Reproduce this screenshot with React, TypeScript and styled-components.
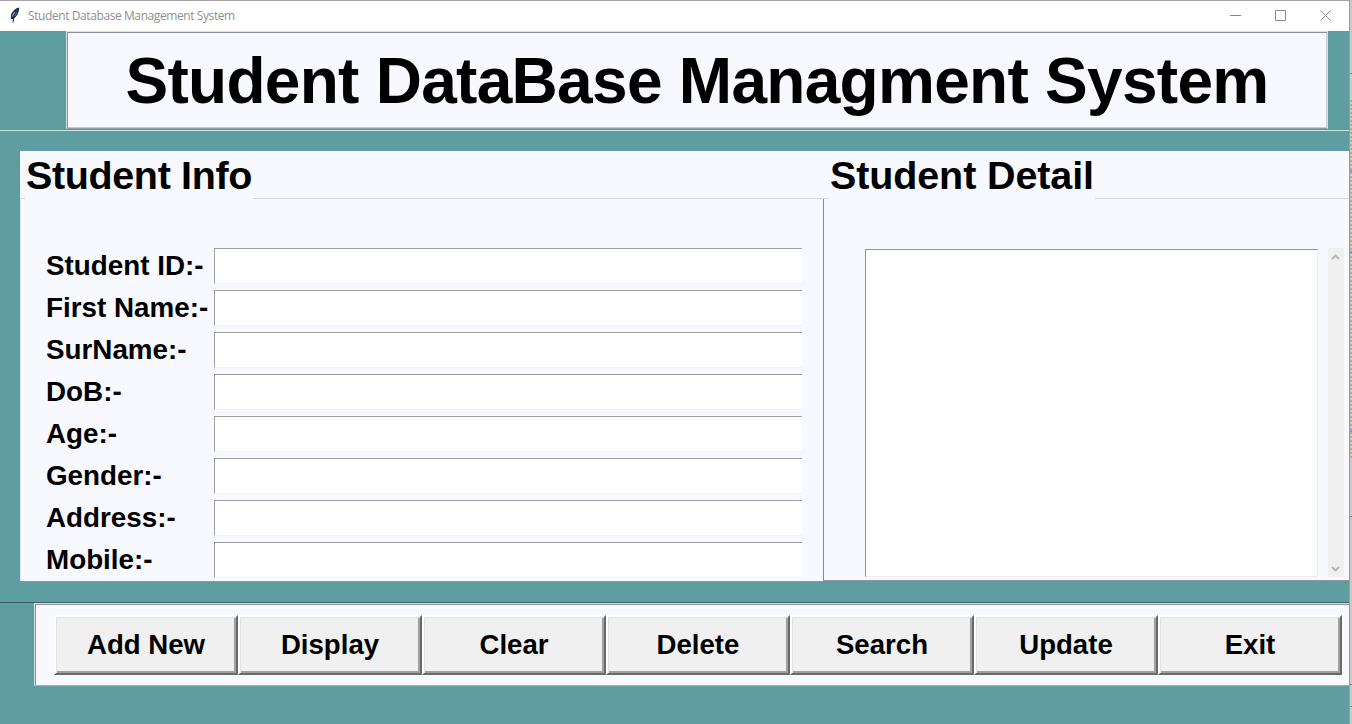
import React from "react";
import styled, { createGlobalStyle } from "styled-components";

const teal = "#5f9ea0";
const ghost = "#f8f8ff";

const Global = createGlobalStyle`
  * { box-sizing: border-box; }
  html, body { margin: 0; overflow: hidden; background: #d9d9dc; }
  body { font-family: "Liberation Sans", Arial, sans-serif; color: #000; }
`;

const Desktop = styled.div`
  display: flex;
  width: 1352px;
  height: 724px;
`;

const Window = styled.div`
  display: flex;
  flex-direction: column;
  width: 1350px;
  height: 724px;
  background: ${teal};
  border-right: 1px solid #8fa0a6;
`;

const Behind = styled.div`
  flex: 1;
  background:
    linear-gradient(#9a8fc4, #9a8fc4) 0 170px / 2px 2px no-repeat,
    linear-gradient(#9a8fc4, #9a8fc4) 0 251px / 2px 2px no-repeat,
    linear-gradient(#9a8fc4, #9a8fc4) 0 430px / 2px 2px no-repeat,
    linear-gradient(#808084, #808084) 0 73px / 2px 1px no-repeat,
    linear-gradient(#808084, #808084) 0 516px / 2px 1px no-repeat,
    linear-gradient(#808084, #808084) 0 684px / 2px 1px no-repeat,
    linear-gradient(#808084, #808084) 0 706px / 2px 1px no-repeat,
    linear-gradient(#cacaca 0 100px, transparent 100px 460px, #cacacb 460px),
    repeating-linear-gradient(#b3a998 0 2px, #cfcac2 2px 4px);
`;

const TitleBar = styled.div`
  display: flex;
  align-items: center;
  flex: none;
  height: 31px;
  padding: 0 18px 2px 9px;
  background: #fff;
  border-top: 1px solid #a3a3a3;
`;

const WindowTitle = styled.div`
  flex: 1;
  margin-left: 7px;
  font: 12px "Open Sans", "Noto Sans", sans-serif;
  letter-spacing: -0.41px;
  color: #8f8f8f;
`;

const Controls = styled.div`
  display: flex;
  gap: 34px;
`;

const Header = styled.div`
  flex: none;
  height: 100px;
  padding: 0 21px 0 66px;
  border-bottom: 1px solid #c5e4e6;
`;

const HeaderPanel = styled.h1`
  display: flex;
  align-items: center;
  justify-content: center;
  height: 98px;
  margin: 0;
  padding-top: 2px;
  background: ${ghost};
  border: 1px solid #d9e0e8;
  border-bottom-color: #929aa2;
  box-shadow: inset 1px 1px #8f8f9b, inset -1px -1px #c9cbd2;
  font-size: 64px;
  line-height: 72px;
  letter-spacing: -0.71px;
  white-space: nowrap;
`;

const Main = styled.div`
  display: flex;
  flex: none;
  height: 431px;
  margin: 20px 0 0 20px;
`;

const Group = styled.section<{ $width?: number; $height: number }>`
  display: flex;
  flex-direction: column;
  height: ${(p) => p.$height}px;
  background: ${ghost};
  border-bottom: 1px solid #8d999f;
  ${(p) => (p.$width ? `flex: 0 0 ${p.$width}px;` : "flex: 1;")}
`;

const Legend = styled.div<{ $text: number; $spacing: number; $indent: number }>`
  display: flex;
  flex: none;
  align-items: flex-end;
  height: 48px;
  &::before, &::after { content: ""; height: 1px; background: #d9d9e2; }
  &::before { width: ${(p) => p.$indent}px; }
  &::after { flex: 1; }
  h2 {
    width: ${(p) => p.$text}px;
    height: 48px;
    margin: 0;
    padding: 1px 0 0 1px;
    font-size: 39.5px;
    line-height: 46px;
    letter-spacing: ${(p) => p.$spacing}px;
    white-space: nowrap;
  }
`;

const Fields = styled.div`
  display: flex;
  flex-direction: column;
  gap: 6px;
  padding: 49px 21px 0 25px;
  border-left: 1px solid #e3e3ec;
  flex: 1;
`;

const Field = styled.label`
  display: flex;
  height: 36px;
  span {
    width: 168px;
    font-size: 27.8px;
    font-weight: bold;
    line-height: 36px;
    white-space: nowrap;
  }
`;

const Entry = styled.input`
  flex: 1;
  min-width: 0;
  border: 0;
  border-radius: 0;
  background: #fff;
  border-top: 1px solid #a0a0a0;
  border-left: 1px solid #a0a0a0;
  border-bottom: 1px solid #f1f1f6;
  outline: 0;
`;

const Detail = styled.div`
  display: flex;
  flex: 1;
  padding: 49px 5px 3px 41px;
  border-left: 1px solid #8d8d96;
`;

const Listing = styled.div`
  width: 453px;
  margin-top: 1px;
  background: #fff;
  border: 1px solid #ececf2;
  border-top-color: #949494;
  border-left-color: #949494;
`;

const Scrollbar = styled.div`
  display: flex;
  flex-direction: column;
  justify-content: space-between;
  align-items: flex-start;
  width: 16px;
  margin-left: 10px;
  padding: 5px 0 4px 3px;
  background: #f0f0f0;
`;

const Footer = styled.div`
  flex: none;
  height: 84px;
  margin-top: 20px;
  padding-left: 34px;
  border-top: 1px solid #386163;
`;

const ButtonPanel = styled.div`
  display: flex;
  height: 83px;
  padding: 11px 0 0 19px;
  background: ${ghost};
  border-top: 1px solid #d9e0e8;
  border-left: 1px solid #d9e0e8;
  border-bottom: 1px solid #9fb4b9;
  box-shadow: inset 1px 1px #8f8f9b;
`;

const Button = styled.button`
  width: 184px;
  height: 60px;
  padding: 0;
  background: #f0f0f0;
  border: 2px solid;
  border-color: #fff #696969 #696969 #fff;
  box-shadow: inset 1px 1px #e3e3e3, inset -2px -2px #a0a0a0;
  font: bold 27.6px/54px "Liberation Sans", Arial, sans-serif;
  color: #000;
`;

const fields = ["Student ID:-", "First Name:-", "SurName:-", "DoB:-", "Age:-", "Gender:-", "Address:-", "Mobile:-"];
const actions = ["Add New", "Display", "Clear", "Delete", "Search", "Update", "Exit"];

const Feather = () => (
  <svg width="12" height="16" viewBox="0 0 12 16">
    <path d="M10.300.5C7 1 3.300 4 2 8L1.800 12l2.800-.3C8 9.500 10 6 10.300.5Z" fill="#18243f" />
    <path d="M8.900 2C6 4.500 4.700 8 4 11L7 8Z" fill="#6f94c8" />
    <path d="M5.500 5 3.300 9.500" stroke="#a9c3e4" strokeWidth="1" />
    <path d="M8.500 3C6 6 4.500 9.500 4 15.500" stroke="#07101f" fill="none" strokeWidth=".9" />
  </svg>
);

const Arrow = ({ down }: { down?: boolean }) => (
  <svg width="9" height="8" viewBox="0 0 9 8">
    <path d={down ? "M1 2 4.500 5.500 8 2" : "M1 6 4.500 2.500 8 6"} fill="none" stroke="#b4b4b4" strokeWidth="1.800" />
  </svg>
);

export default function App() {
  return (
    <Desktop>
      <Global />
      <Window>
        <TitleBar>
          <Feather />
          <WindowTitle>Student Database Management System</WindowTitle>
          <Controls>
            <svg width="11" height="11"><path d="M0 5.500H11" stroke="#8a8a8a" /></svg>
            <svg width="11" height="11"><path d="M.5.5h10v10H.5Z" stroke="#8a8a8a" fill="none" /></svg>
            <svg width="11" height="11"><path d="M.5.5l10 10M10.500.5l-10 10" stroke="#8a8a8a" /></svg>
          </Controls>
        </TitleBar>
        <Header>
          <HeaderPanel>Student DataBase Managment System</HeaderPanel>
        </Header>
        <Main>
          <Group $width={803} $height={431}>
            <Legend $text={228} $spacing={-0.37} $indent={5}><h2>Student Info</h2></Legend>
            <Fields>
              {fields.map((f) => (
                <Field key={f}><span>{f}</span><Entry /></Field>
              ))}
            </Fields>
          </Group>
          <Group $height={430}>
            <Legend $text={266} $spacing={-0.12} $indent={6}><h2>Student Detail</h2></Legend>
            <Detail>
              <Listing />
              <Scrollbar><Arrow /><Arrow down /></Scrollbar>
            </Detail>
          </Group>
        </Main>
        <Footer>
          <ButtonPanel>
            {actions.map((a) => <Button key={a}>{a}</Button>)}
          </ButtonPanel>
        </Footer>
      </Window>
      <Behind />
    </Desktop>
  );
}
